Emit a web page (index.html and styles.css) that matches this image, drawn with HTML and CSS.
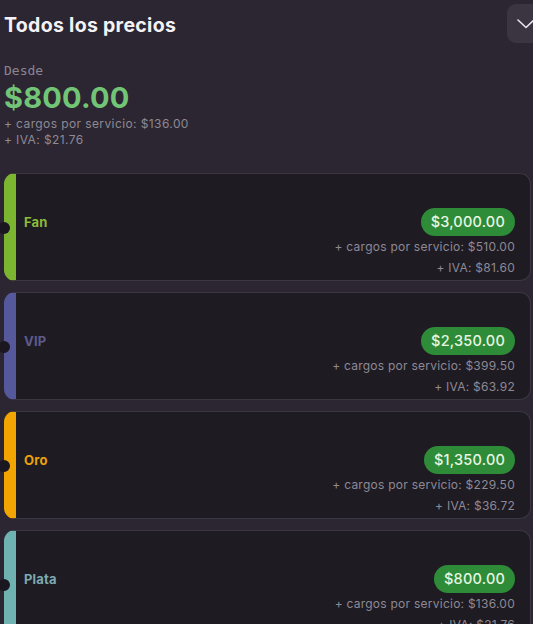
FILE: index.html
```html
<!DOCTYPE html>
<html lang="es">
<head>
  <meta charset="UTF-8">
  <title>Todos los precios</title>
  <link rel="stylesheet" href="styles.css">
</head>
<body>
  <!-- Header -->
  <div class="header">
    <h1 class="title">Todos los precios</h1>
    <button class="toggle" aria-label="Cerrar">
      <svg width="18" height="10" viewBox="0 0 18 10"><path d="M1 1 L9 8.5 L17 1" fill="none" stroke="#e8e6ec" stroke-width="1.6" stroke-linecap="round" stroke-linejoin="round"/></svg>
    </button>
  </div>

  <!-- Summary -->
  <div class="summary">
    <div class="from">Desde</div>
    <div class="from-price">$800.00</div>
    <div class="fee">+ cargos por servicio: $136.00</div>
    <div class="fee">+ IVA: $21.76</div>
  </div>

  <!-- Zones -->
  <div class="zones">
    <div class="zone zone-fan">
      <div class="zone-row">
        <span class="zone-name">Fan</span>
        <span class="pill">$3,000.00</span>
      </div>
      <div class="zone-fee">+ cargos por servicio: $510.00</div>
      <div class="zone-fee">+ IVA: $81.60</div>
    </div>

    <div class="zone zone-vip">
      <div class="zone-row">
        <span class="zone-name">VIP</span>
        <span class="pill">$2,350.00</span>
      </div>
      <div class="zone-fee">+ cargos por servicio: $399.50</div>
      <div class="zone-fee">+ IVA: $63.92</div>
    </div>

    <div class="zone zone-oro">
      <div class="zone-row">
        <span class="zone-name">Oro</span>
        <span class="pill">$1,350.00</span>
      </div>
      <div class="zone-fee">+ cargos por servicio: $229.50</div>
      <div class="zone-fee">+ IVA: $36.72</div>
    </div>

    <div class="zone zone-plata">
      <div class="zone-row">
        <span class="zone-name">Plata</span>
        <span class="pill">$800.00</span>
      </div>
      <div class="zone-fee">+ cargos por servicio: $136.00</div>
      <div class="zone-fee">+ IVA: $21.76</div>
    </div>
  </div>
</body>
</html>
```

FILE: styles.css
```css
body {
  margin: 0;
  padding: 0 2px 0 4px;
  background-color: #2b2631;
  color: #ffffff;
  font-family: Inter, "Open Sans", sans-serif;
  overflow: hidden;
  height: 624px;
}

.header {
  display: flex;
  justify-content: space-between;
  align-items: flex-start;
  height: 50px;
  margin-right: -16px;
}

.title {
  margin: 13px 0 0 0;
  font-size: 19.5px;
  line-height: 24px;
  font-weight: 700;
  color: #f4f2f6;
  letter-spacing: 0.3px;
}

.toggle {
  margin-top: 4px;
  width: 40px;
  height: 39px;
  border: none;
  border-radius: 9px;
  background-color: #3b3542;
  display: flex;
  align-items: center;
  justify-content: flex-start;
  padding: 0 0 0 10px;
}

.summary {
  margin-top: 12px;
}

.from {
  font-family: "DejaVu Sans Mono", monospace;
  font-size: 13px;
  color: #8b8592;
  line-height: 18px;
}

.from-price {
  font-size: 29px;
  font-weight: 700;
  color: #72c576;
  line-height: 36px;
  letter-spacing: 0.2px;
}

.fee {
  font-size: 12px;
  color: #8e8994;
  line-height: 16px;
  letter-spacing: 0.4px;
}

.zones {
  margin-top: 25px;
  display: flex;
  flex-direction: column;
  gap: 11px;
}

.zone {
  position: relative;
  flex: none;
  height: 108px;
  box-sizing: border-box;
  background-color: #1e1b23;
  border: 1px solid #3b3641;
  border-left: 12px solid #7cb631;
  border-radius: 11px;
  padding: 33px 15px 0 8px;
}

/* ticket notch */
.zone::before {
  content: "";
  position: absolute;
  left: -18px;
  top: 48px;
  width: 12px;
  height: 12px;
  border-radius: 50%;
  background-color: #1a1720;
}

.zone-row {
  display: flex;
  justify-content: space-between;
  align-items: center;
  height: 29px;
}

.zone-name {
  font-size: 13px;
  font-weight: 700;
  letter-spacing: 0.2px;
}

.pill {
  background-color: #2e8b38;
  color: #e6f6e2;
  font-size: 14.5px;
  font-weight: 500;
  line-height: 28px;
  padding: 0 10px;
  border-radius: 14px;
  letter-spacing: 0.2px;
}

.zone-fee {
  text-align: right;
  font-size: 12px;
  color: #8e8994;
  line-height: 21px;
  letter-spacing: 0.25px;
}

.zone-fan { border-left-color: #7cb631; }
.zone-fan .zone-name { color: #8bbd3a; }

.zone-vip { border-left-color: #55589a; }
.zone-vip .zone-name { color: #5d5b8e; }

.zone-oro { border-left-color: #f2a400; }
.zone-oro .zone-name { color: #eba20a; }

.zone-plata { border-left-color: #6fb2b2; }
.zone-plata .zone-name { color: #7ca9b2; }
```
